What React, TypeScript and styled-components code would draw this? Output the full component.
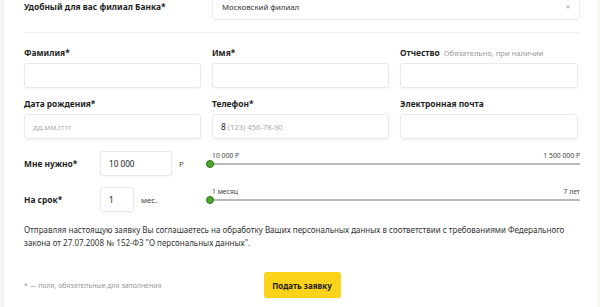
import React from "react";
import styled, { createGlobalStyle } from "styled-components";

const Global = createGlobalStyle`
  html, body { margin: 0; padding: 0; background: #fff; }
  body { font-family: "Noto Sans", "Open Sans", Arial, sans-serif; color: #222; }
  * { box-sizing: border-box; }
`;

const Page = styled.div`
  display: flex;
  width: 600px;
  height: 307px;
  overflow: hidden;
  background: #fff;
`;

const LeftEdge = styled.div`
  width: 4px;
  flex: none;
  background: #f5f5f5;
  border-right: 1px solid #ededed;
`;

const RightEdge = styled.div`
  width: 5px;
  flex: none;
  background: #fbf8f1;
`;

const Form = styled.form`
  flex: 1;
  padding: 0 17px 0 20px;
  display: flex;
  flex-direction: column;
`;

const TopRow = styled.div`
  display: grid;
  grid-template-columns: 177px 1fr;
  column-gap: 11px;
  align-items: center;
  margin-top: -6px;
`;

const Label = styled.div`
  font-size: 8.4px;
  font-weight: 700;
  line-height: 12px;
  color: #1f1f1f;
  white-space: nowrap;
`;

const Hint = styled.span`
  font-weight: 400;
  color: #9a9a9a;
  font-size: 7.6px;
  margin-left: 4px;
`;

const Select = styled.div`
  height: 26px;
  border: 1px solid #ececec;
  border-radius: 3px;
  display: flex;
  align-items: center;
  justify-content: space-between;
  padding: 0 9px 0 9px;
  font-size: 7.8px;
  color: #333;
  box-shadow: 0 1px 2px rgba(0, 0, 0, 0.04);
`;

const Caret = styled.span`
  width: 0;
  height: 0;
  border-left: 2px solid transparent;
  border-right: 2px solid transparent;
  border-top: 3px solid #b8b8b8;
`;

const Divider = styled.hr`
  border: none;
  height: 1px;
  background: #efefef;
  margin: 12px 0 0 0;
  width: 556px;
`;

const FieldGrid = styled.div`
  display: grid;
  grid-template-columns: 177px 177px 178px;
  column-gap: 11px;
  row-gap: 10px;
  margin-top: 14px;
`;

const Field = styled.div`
  display: flex;
  flex-direction: column;
  gap: 4px;
`;

const Input = styled.div<{ $w?: number }>`
  height: 25px;
  width: ${(p) => (p.$w ? `${p.$w}px` : "100%")};
  flex: none;
  border: 1px solid #e9e9e9;
  border-radius: 3px;
  box-shadow: 0 1px 2px rgba(0, 0, 0, 0.05);
  display: flex;
  align-items: center;
  padding: 0 8px;
  font-size: 8.2px;
  color: #222;
`;

const Placeholder = styled.span`
  color: #aaa;
  font-size: 7.6px;
`;

const PhoneStart = styled.span`
  color: #222;
  margin-right: 2px;
  font-size: 8.4px;
`;

const RangeRow = styled.div<{ $top: number }>`
  display: grid;
  grid-template-columns: 76px 106px 1fr;
  align-items: center;
  margin-top: ${(p) => p.$top}px;
`;

const ValueGroup = styled.div`
  display: flex;
  align-items: center;
  gap: 7px;
`;

const Unit = styled.div`
  font-size: 7.8px;
  color: #444;
`;

const Slider = styled.div`
  position: relative;
  height: 25px;
`;

const SliderLabels = styled.div`
  display: flex;
  justify-content: space-between;
  font-size: 6.8px;
  line-height: 9px;
  color: #444;
  padding-left: 6px;
`;

const Track = styled.div`
  position: absolute;
  left: 4px;
  right: 0;
  top: 12px;
  height: 2px;
  background: #b9b9b9;
  border-radius: 1px;
`;

const Thumb = styled.div`
  position: absolute;
  left: 0;
  top: 9px;
  width: 8px;
  height: 8px;
  border-radius: 50%;
  background: #4ea82a;
  border: 1.5px solid #2c7618;
`;

const Consent = styled.p`
  margin: 11px 0 0 0;
  font-size: 8px;
  line-height: 13px;
  color: #333;
  width: 545px;
`;

const Footer = styled.div`
  display: grid;
  grid-template-columns: 1fr auto 1fr;
  align-items: center;
  width: 556px;
  margin-top: 23px;
`;

const Note = styled.div`
  font-size: 6.9px;
  color: #999;
`;

const Button = styled.button`
  height: 26px;
  width: 77px;
  border: none;
  border-radius: 3px;
  background: #fdd21a;
  font-family: inherit;
  font-size: 8px;
  font-weight: 700;
  color: #222;
  padding: 0;
  cursor: pointer;
  box-shadow: 0 1px 2px rgba(0, 0, 0, 0.08);
`;

function RangeSlider({ min, max }: { min: string; max: string }) {
  return (
    <Slider>
      <SliderLabels>
        <span>{min}</span>
        <span>{max}</span>
      </SliderLabels>
      <Track />
      <Thumb />
    </Slider>
  );
}

export default function App() {
  return (
    <Page>
      <Global />
      <LeftEdge />
      <Form onSubmit={(e) => e.preventDefault()}>
        <TopRow>
          <Label>Удобный для вас филиал Банка*</Label>
          <Select>
            <span>Московский филиал</span>
            <Caret />
          </Select>
        </TopRow>
        <Divider />
        <FieldGrid>
          <Field>
            <Label>Фамилия*</Label>
            <Input />
          </Field>
          <Field>
            <Label>Имя*</Label>
            <Input />
          </Field>
          <Field>
            <Label>
              Отчество<Hint>Обязательно, при наличии</Hint>
            </Label>
            <Input />
          </Field>
          <Field>
            <Label>Дата рождения*</Label>
            <Input>
              <Placeholder>дд.мм.гггг</Placeholder>
            </Input>
          </Field>
          <Field>
            <Label>Телефон*</Label>
            <Input>
              <PhoneStart>8</PhoneStart>
              <Placeholder>(123) 456-78-90</Placeholder>
            </Input>
          </Field>
          <Field>
            <Label>Электронная почта</Label>
            <Input />
          </Field>
        </FieldGrid>
        <RangeRow $top={12}>
          <Label>Мне нужно*</Label>
          <ValueGroup>
            <Input $w={72}>10 000</Input>
            <Unit>Р</Unit>
          </ValueGroup>
          <RangeSlider min="10 000 Р" max="1 500 000 Р" />
        </RangeRow>
        <RangeRow $top={11}>
          <Label>На срок*</Label>
          <ValueGroup>
            <Input $w={34}>1</Input>
            <Unit>мес.</Unit>
          </ValueGroup>
          <RangeSlider min="1 месяц" max="7 лет" />
        </RangeRow>
        <Consent>
          Отправляя настоящую заявку Вы соглашаетесь на обработку Ваших персональных данных в соответствии с
          требованиями Федерального закона от 27.07.2008 № 152-ФЗ "О персональных данных".
        </Consent>
        <Footer>
          <Note>* — поля, обязательные для заполнения</Note>
          <Button type="submit">Подать заявку</Button>
          <span />
        </Footer>
      </Form>
      <RightEdge />
    </Page>
  );
}
